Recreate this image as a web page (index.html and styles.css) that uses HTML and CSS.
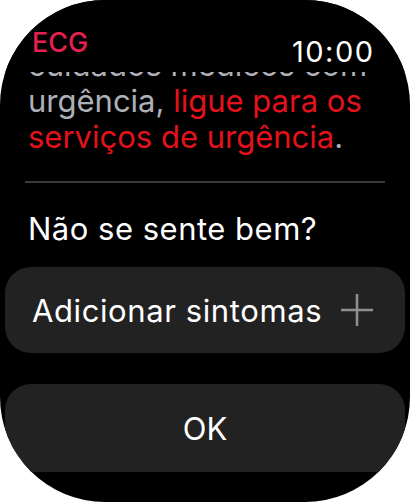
FILE: index.html
```html
<!DOCTYPE html>
<html lang="pt">
<head>
  <meta charset="UTF-8">
  <title>ECG</title>
  <link rel="stylesheet" href="styles.css">
</head>
<body>
  <div class="watch">
    <!-- barra de estado sobre o conteúdo que desliza -->
    <div class="status">
      <span class="app-name">ECG</span>
      <span class="time">10:00</span>
    </div>

    <div class="content">
      <p class="message">
        cuidados médicos com urgência, <span class="alert">ligue para os serviços de urgência</span>.
      </p>

      <div class="divider"></div>

      <div class="question">Não se sente bem?</div>

      <button type="button" class="row-btn">
        <span>Adicionar sintomas</span>
        <svg class="plus" width="34" height="34" viewBox="0 0 34 34">
          <path d="M17 1V33M1 17H33" stroke="#8e8e93" stroke-width="2.6" fill="none"/>
        </svg>
      </button>

      <button type="button" class="ok-btn">OK</button>
    </div>
  </div>
</body>
</html>
```

FILE: styles.css
```css
body {
  margin: 0;
  background: #fff;
  font-family: Inter, Roboto, "Noto Sans", sans-serif;
}

.watch {
  position: relative;
  width: 410px;
  height: 502px;
  background: #000;
  border-radius: 105px;
  overflow: hidden;
  color: #fff;
}

.status {
  position: absolute;
  top: 0;
  left: 0;
  right: 0;
  height: 72px;
  background: #000;
  z-index: 1;
  display: flex;
  justify-content: space-between;
  align-items: flex-start;
  padding: 0 37px 0 32px;
}

.app-name {
  margin-top: 27px;
  font-size: 27px;
  line-height: 32px;
  font-weight: 500;
  color: #e3204f;
}

.time {
  margin-top: 35px;
  margin-right: -1.5px;
  font-size: 29px;
  line-height: 34px;
  letter-spacing: 1.5px;
  color: #fff;
}

.content {
  padding: 47px 5px 0;
}

.message {
  margin: 0 0 0 23px;
  font-size: 31px;
  line-height: 36px;
  color: #aeb0b8;
}

.alert {
  color: #e3121b;
}

.divider {
  height: 2px;
  margin: 26px 20px 0;
  background: #3a3a3c;
}

.question {
  margin: 28px 0 0 23px;
  font-size: 31px;
  line-height: 36px;
  letter-spacing: 0.5px;
}

.row-btn, .ok-btn {
  display: flex;
  align-items: center;
  width: 100%;
  border: none;
  border-radius: 26px;
  background: #222;
  color: #fff;
  font-family: inherit;
  font-size: 31px;
  padding: 0;
}

.row-btn {
  height: 86px;
  margin-top: 20px;
  padding: 0 31px 0 27px;
  justify-content: space-between;
  letter-spacing: 0.6px;
}

.ok-btn {
  height: 88px;
  margin-top: 31px;
  justify-content: center;
}
```
